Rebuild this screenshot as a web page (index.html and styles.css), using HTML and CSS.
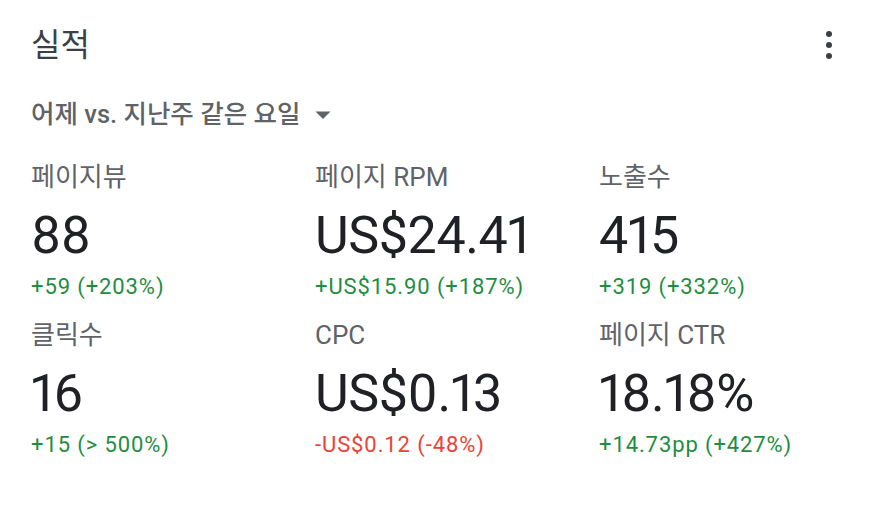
FILE: index.html
```html
<!DOCTYPE html>
<html lang="ko">
<head>
<meta charset="utf-8">
<title>실적</title>
<link rel="stylesheet" href="styles.css">
</head>
<body>
<div class="card">
  <div class="header">
    <div class="title">실적</div>
    <svg class="more" width="12" height="34" viewBox="0 0 12 34" aria-hidden="true">
      <circle cx="6" cy="6" r="3"/>
      <circle cx="6" cy="17" r="3"/>
      <circle cx="6" cy="28" r="3"/>
    </svg>
  </div>
  <div class="range">
    <span>어제 vs. 지난주 같은 요일</span>
    <svg class="caret" width="16" height="8" viewBox="0 0 16 8" aria-hidden="true"><path d="M0.5 0.5 L15.5 0.5 L8 8 Z"/></svg>
  </div>
  <div class="grid">
    <div class="metric">
      <div class="label">페이지뷰</div>
      <div class="value">88</div>
      <div class="change up">+59 (+203%)</div>
    </div>
    <div class="metric">
      <div class="label">페이지 RPM</div>
      <div class="value">US$24.41</div>
      <div class="change up">+US$15.90 (+187%)</div>
    </div>
    <div class="metric">
      <div class="label">노출수</div>
      <div class="value">415</div>
      <div class="change up">+319 (+332%)</div>
    </div>
    <div class="metric">
      <div class="label">클릭수</div>
      <div class="value">16</div>
      <div class="change up">+15 (&gt; 500%)</div>
    </div>
    <div class="metric">
      <div class="label">CPC</div>
      <div class="value">US$0.13</div>
      <div class="change down">-US$0.12 (-48%)</div>
    </div>
    <div class="metric">
      <div class="label">페이지 CTR</div>
      <div class="value">18.18%</div>
      <div class="change up">+14.73pp (+427%)</div>
    </div>
  </div>
</div>
</body>
</html>
```
FILE: styles.css
```css
html, body {
  margin: 0;
  padding: 0;
  background: #ffffff;
}

body {
  font-family: "Roboto", "Noto Sans CJK KR", sans-serif;
  color: #202124;
}

.card {
  width: 874px;
  height: 528px;
  box-sizing: border-box;
  padding: 0 39px 0 31px;
}

.header {
  height: 90px;
  display: flex;
  align-items: center;
  justify-content: space-between;
}

.title {
  font-size: 32px;
  line-height: 44px;
  color: #3c4043;
}

.more {
  fill: #3c4043;
}

.range {
  margin-top: 9px;
  height: 30px;
  display: flex;
  align-items: center;
  gap: 15px;
  font-size: 25.5px;
  font-weight: 500;
  line-height: 30px;
  color: #5f6368;
}

.caret {
  fill: #5f6368;
  margin-top: 2px;
}

.grid {
  margin-top: 33px;
  display: grid;
  grid-template-columns: 284px 284px 284px;
  row-gap: 19px;
}

.label {
  font-size: 26px;
  line-height: 30px;
  color: #5f6368;
}

.value {
  margin-top: 13px;
  font-size: 52px;
  line-height: 62px;
  letter-spacing: -0.4px;
  font-variant-numeric: proportional-nums;
  color: #202124;
}

.change {
  margin-top: 6px;
  font-size: 22px;
  line-height: 28px;
  letter-spacing: 0.9px;
}

.up {
  color: #1e8e3e;
}

.down {
  color: #ea4335;
}
```
